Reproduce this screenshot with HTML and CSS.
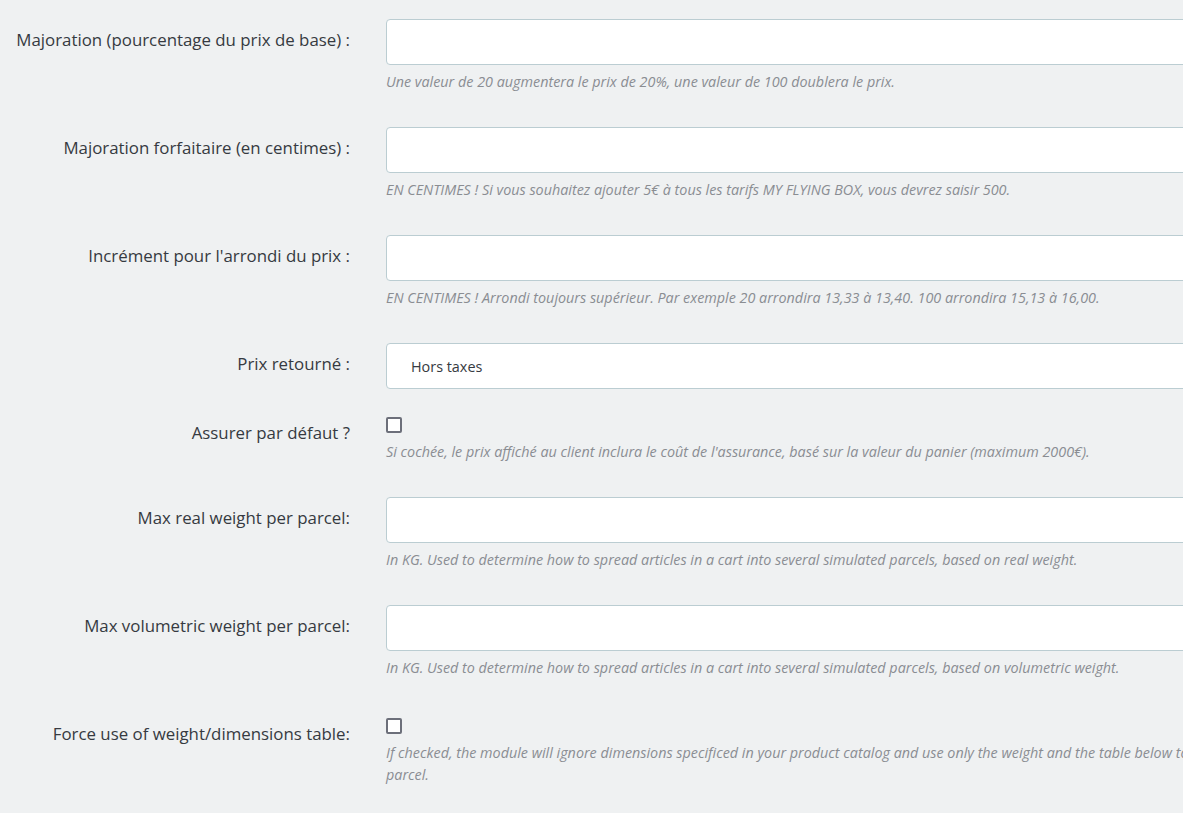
FILE: index.html
```html
<!DOCTYPE html>
<html lang="fr">
<head>
    <meta charset="UTF-8">
    <title>Configuration MY FLYING BOX</title>
    <link rel="stylesheet" href="styles.css">
</head>
<body>
    <form class="config-form">
        <div class="form-group">
            <label class="control-label" for="surcharge_percent">Majoration (pourcentage du prix de base) :</label>
            <div class="field">
                <input type="text" id="surcharge_percent" class="form-control">
                <p class="help-block">Une valeur de 20 augmentera le prix de 20%, une valeur de 100 doublera le prix.</p>
            </div>
        </div>

        <div class="form-group">
            <label class="control-label" for="surcharge_amount">Majoration forfaitaire (en centimes) :</label>
            <div class="field">
                <input type="text" id="surcharge_amount" class="form-control">
                <p class="help-block">EN CENTIMES ! Si vous souhaitez ajouter 5€ à tous les tarifs MY FLYING BOX, vous devrez saisir 500.</p>
            </div>
        </div>

        <div class="form-group">
            <label class="control-label" for="price_round">Incrément pour l'arrondi du prix :</label>
            <div class="field">
                <input type="text" id="price_round" class="form-control">
                <p class="help-block">EN CENTIMES ! Arrondi toujours supérieur. Par exemple 20 arrondira 13,33 à 13,40. 100 arrondira 15,13 à 16,00.</p>
            </div>
        </div>

        <div class="form-group">
            <label class="control-label" for="price_tax">Prix retourné :</label>
            <div class="field">
                <select id="price_tax" class="form-control select">
                    <option>Hors taxes</option>
                    <option>TTC</option>
                </select>
            </div>
        </div>

        <div class="form-group">
            <label class="control-label" for="insure">Assurer par défaut ?</label>
            <div class="field">
                <div class="checkbox"><input type="checkbox" id="insure"></div>
                <p class="help-block after-check">Si cochée, le prix affiché au client inclura le coût de l'assurance, basé sur la valeur du panier (maximum 2000€).</p>
            </div>
        </div>

        <div class="form-group">
            <label class="control-label" for="max_real_weight">Max real weight per parcel:</label>
            <div class="field">
                <input type="text" id="max_real_weight" class="form-control">
                <p class="help-block">In KG. Used to determine how to spread articles in a cart into several simulated parcels, based on real weight.</p>
            </div>
        </div>

        <div class="form-group">
            <label class="control-label" for="max_vol_weight">Max volumetric weight per parcel:</label>
            <div class="field">
                <input type="text" id="max_vol_weight" class="form-control">
                <p class="help-block">In KG. Used to determine how to spread articles in a cart into several simulated parcels, based on volumetric weight.</p>
            </div>
        </div>

        <div class="form-group">
            <label class="control-label" for="force_table">Force use of weight/dimensions table:</label>
            <div class="field">
                <div class="checkbox"><input type="checkbox" id="force_table"></div>
                <p class="help-block after-check">If checked, the module will ignore dimensions specificed in your product catalog and use only the weight and the table below to build each parcel.</p>
            </div>
        </div>
    </form>
</body>
</html>
```

FILE: styles.css
```css
html, body {
    height: 100%;
    overflow: hidden;
}
body {
    margin: 0;
    background-color: #eff1f2;
    font-family: "Open Sans", Arial, sans-serif;
    color: #363a41;
}
.config-form {
    padding-top: 19px;
}
.form-group {
    display: grid;
    grid-template-columns: 350px 900px;
    column-gap: 36px;
    margin-bottom: 23px;
}
.control-label {
    text-align: right;
    font-size: 16.85px;
    line-height: 22px;
    padding-top: 10px;
}
.form-control {
    display: block;
    box-sizing: border-box;
    width: 100%;
    height: 46px;
    margin: 0;
    padding: 0 24px;
    border: 1px solid #bbcdd2;
    border-radius: 4px;
    background-color: #fff;
    font-family: inherit;
    font-size: 14.4px;
    color: #363a41;
}
.select {
    appearance: none;
}
.help-block {
    margin: 6px 0 11px;
    font-size: 14.35px;
    font-style: italic;
    line-height: 22px;
    color: #8a8d92;
}
.checkbox {
    height: 16px;
    padding-top: 5px;
}
.checkbox input {
    appearance: none;
    display: block;
    box-sizing: border-box;
    width: 16px;
    height: 16px;
    margin: 0;
    border: 2px solid #6c6f7a;
    border-radius: 2px;
    background-color: #fff;
}
.help-block.after-check {
    margin-top: 8px;
}
```
